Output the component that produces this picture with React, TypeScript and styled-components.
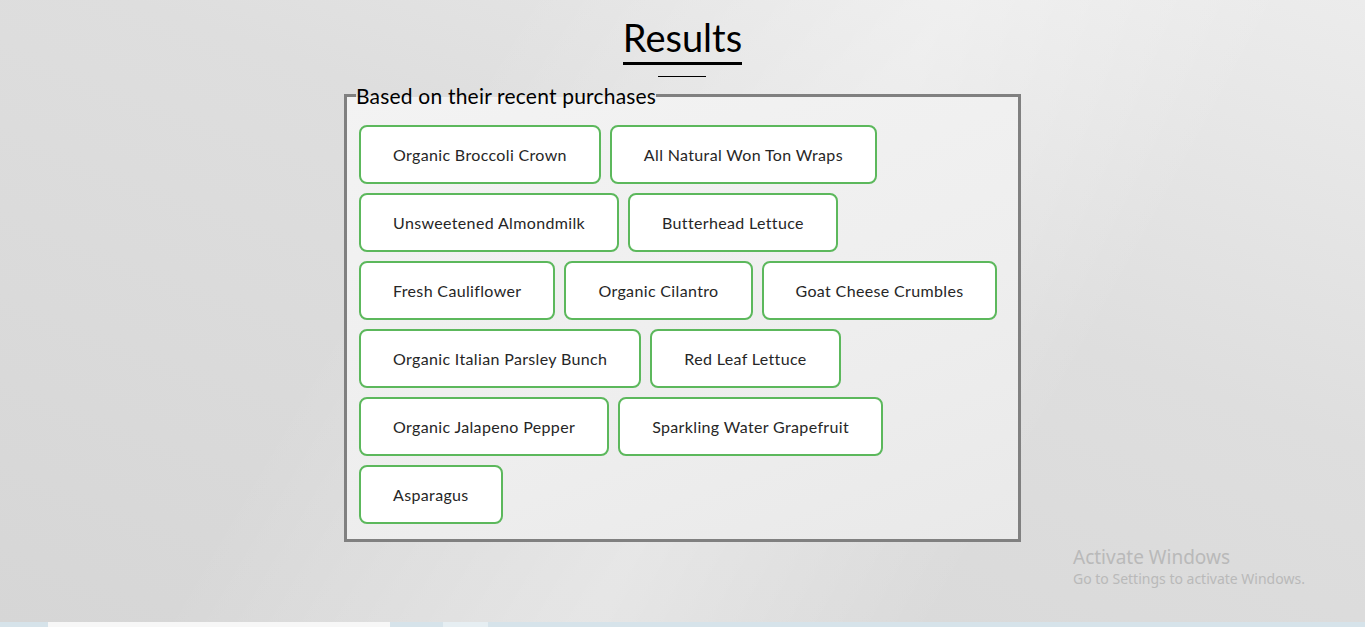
import React from "react";
import styled, { createGlobalStyle } from "styled-components";

const Global = createGlobalStyle`
  html, body { margin: 0; padding: 0; height: 100%; }
  body {
    font-family: Lato, "Noto Sans", sans-serif;
    background: #dcdcdc;
    overflow: hidden;
  }
`;

const Page = styled.div`
  position: relative;
  width: 1365px;
  height: 627px;
  background:
    linear-gradient(120deg, rgba(255,255,255,0) 30%, rgba(255,255,255,0.35) 55%, rgba(255,255,255,0) 75%),
    linear-gradient(200deg, #ececec 0%, #dedede 40%, #d6d6d6 100%);
  display: flex;
  flex-direction: column;
  align-items: center;
`;

const Header = styled.div`
  display: flex;
  flex-direction: column;
  align-items: center;
  padding-top: 14px;
`;

const Title = styled.h1`
  margin: 0;
  font-family: Lato, sans-serif;
  font-weight: 400;
  font-size: 38px;
  line-height: 46px;
  color: #000;
  border-bottom: 3px solid #000;
  padding-bottom: 2px;
`;

const Rule = styled.div`
  width: 48px;
  height: 1px;
  background: #000;
  margin-top: 11px;
`;

const Box = styled.fieldset`
  margin: 6px 0 0 0;
  width: 677px;
  box-sizing: border-box;
  border: 3px solid #808080;
  padding: 17px 12px 15px 12px;
  background: linear-gradient(160deg, #f3f3f3 0%, #eeeeee 60%, #e9e9e9 100%);
`;

const Legend = styled.legend`
  padding: 0;
  font-family: Lato, sans-serif;
  font-size: 21px;
  letter-spacing: 0.2px;
  color: #000;
  margin-left: -3px;
`;

const Grid = styled.div`
  display: flex;
  flex-wrap: wrap;
  gap: 9px;
`;

const Item = styled.button`
  font-family: Lato, sans-serif;
  font-size: 16px;
  letter-spacing: 0.35px;
  line-height: 19px;
  color: #262626;
  background: #fff;
  border: 2px solid #5cb85c;
  border-radius: 8px;
  padding: 18px 32px;
  cursor: pointer;
`;

const Watermark = styled.div`
  position: absolute;
  left: 1073px;
  top: 545px;
  font-family: "Noto Sans", "Open Sans", sans-serif;
  color: #b9b9b9;
`;

const WmTitle = styled.div`
  font-size: 19px;
  line-height: 24px;
`;

const WmSub = styled.div`
  font-size: 14px;
  line-height: 20px;
`;

const Taskbar = styled.div`
  position: absolute;
  left: 0;
  bottom: 0;
  width: 100%;
  height: 5px;
  background: #d6e3ea;
  display: flex;
`;

const TaskSeg = styled.div<{ $left: number; $width: number; $color: string }>`
  margin-left: ${(p) => p.$left}px;
  width: ${(p) => p.$width}px;
  background: ${(p) => p.$color};
`;

const items = [
  "Organic Broccoli Crown",
  "All Natural Won Ton Wraps",
  "Unsweetened Almondmilk",
  "Butterhead Lettuce",
  "Fresh Cauliflower",
  "Organic Cilantro",
  "Goat Cheese Crumbles",
  "Organic Italian Parsley Bunch",
  "Red Leaf Lettuce",
  "Organic Jalapeno Pepper",
  "Sparkling Water Grapefruit",
  "Asparagus",
];

export default function App() {
  return (
    <>
      <Global />
      <Page>
        <Header>
          <Title>Results</Title>
          <Rule />
        </Header>
        <Box>
          <Legend>Based on their recent purchases</Legend>
          <Grid>
            {items.map((t) => (
              <Item key={t}>{t}</Item>
            ))}
          </Grid>
        </Box>
        <Watermark>
          <WmTitle>Activate Windows</WmTitle>
          <WmSub>Go to Settings to activate Windows.</WmSub>
        </Watermark>
        <Taskbar>
          <TaskSeg $left={48} $width={342} $color="#f7f7f7" />
          <TaskSeg $left={53} $width={45} $color="#e6eef2" />
        </Taskbar>
      </Page>
    </>
  );
}
